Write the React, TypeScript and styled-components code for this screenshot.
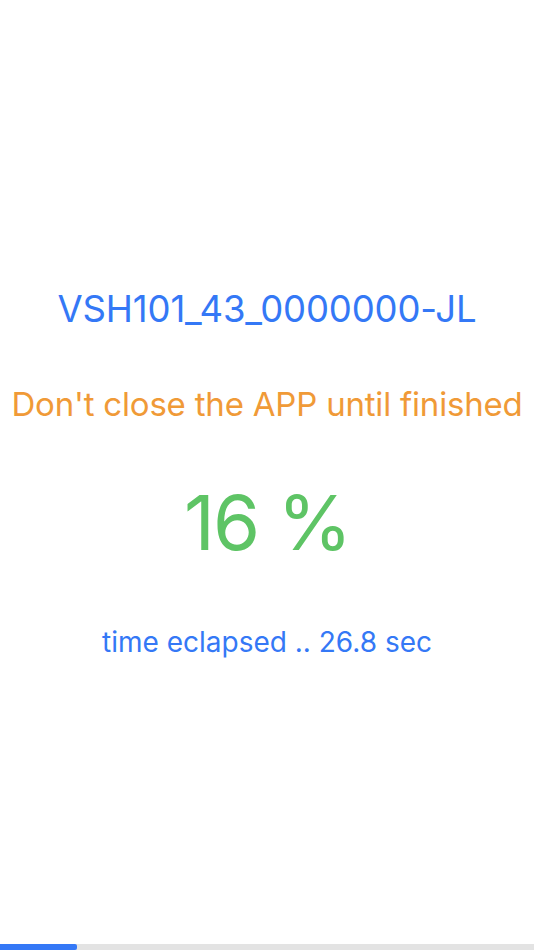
import React from "react";
import styled, { createGlobalStyle } from "styled-components";

const Global = createGlobalStyle`
  html, body { margin: 0; padding: 0; background: #ffffff; }
  body { font-family: Inter, "Noto Sans", sans-serif; }
`;

const Screen = styled.div`
  width: 534px;
  height: 950px;
  display: flex;
  flex-direction: column;
  background: #ffffff;
  overflow: hidden;
`;

const Content = styled.div`
  flex: 1;
  display: flex;
  flex-direction: column;
  align-items: center;
  padding-top: 288px;
`;

const Line = styled.div<{ $color: string; $size: number; $mt: number; $ls: number }>`
  color: ${(p) => p.$color};
  font-size: ${(p) => p.$size}px;
  line-height: 1.2;
  margin-top: ${(p) => p.$mt}px;
  letter-spacing: ${(p) => p.$ls}px;
  white-space: nowrap;
`;

const Track = styled.div`
  height: 6px;
  background: #e3e3e3;
  display: flex;
`;

const Fill = styled.div`
  height: 100%;
  background: #3478f6;
  border-radius: 0 2px 2px 0;
`;

export default function App() {
  const progress = 77 / 534;
  return (
    <>
      <Global />
      <Screen>
        <Content>
          <Line $color="#3478f6" $size={36.5} $mt={0} $ls={-0.15}>VSH101_43_0000000-JL</Line>
          <Line $color="#f09a37" $size={33} $mt={53} $ls={-0.2}>Don't close the APP until finished</Line>
          <Line $color="#5ec465" $size={76} $mt={53} $ls={-2}>16 %</Line>
          <Line $color="#3478f6" $size={28} $mt={57} $ls={0}>time eclapsed .. 26.8 sec</Line>
        </Content>
        <Track>
          <Fill style={{ width: `${progress * 100}%` }} />
        </Track>
      </Screen>
    </>
  );
}
